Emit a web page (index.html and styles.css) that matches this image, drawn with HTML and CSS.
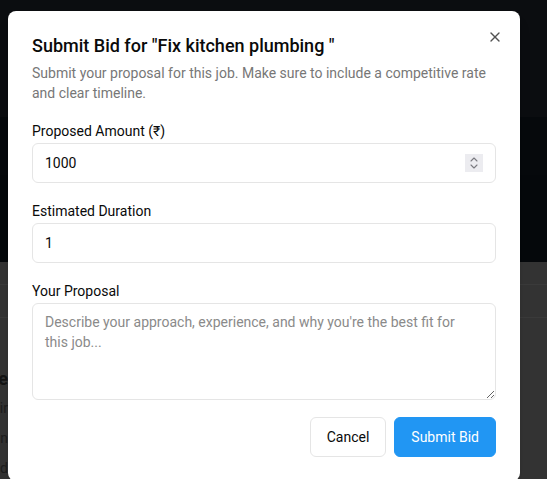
FILE: index.html
```html
<!DOCTYPE html>
<html lang="en">
<head>
<meta charset="utf-8">
<title>Submit Bid</title>
<link rel="stylesheet" href="styles.css">
</head>
<body>
<div class="page">
  <header class="page-top"></header>
  <div class="page-band">
    <div class="band-a"></div>
    <div class="band-b"></div>
  </div>
  <main class="page-main">
    <div class="row-line"></div>
    <div class="row-line second"></div>
    <div class="peek">
      <p class="peek-title">Active Jobs for you to explore</p>
      <p class="peek-text">Pipe repair</p>
      <p class="peek-text">Location</p>
      <p class="peek-text">Posted</p>
    </div>
  </main>

  <div class="dialog" role="dialog" aria-labelledby="dlg-title">
    <button class="close" aria-label="Close">
      <svg width="16" height="16" viewBox="0 0 24 24" fill="none" stroke="currentColor" stroke-width="2" stroke-linecap="round" stroke-linejoin="round"><path d="M18 6 6 18"/><path d="m6 6 12 12"/></svg>
    </button>
    <div class="dialog-header">
      <h2 id="dlg-title" class="dialog-title">Submit Bid for "Fix kitchen plumbing "</h2>
      <p class="dialog-desc">Submit your proposal for this job. Make sure to include a competitive rate and clear timeline.</p>
    </div>
    <form class="form">
      <div class="field">
        <label class="label" for="amount">Proposed Amount (₹)</label>
        <div class="input-wrap">
          <input class="input" id="amount" type="text" value="1000">
          <span class="spinner" aria-hidden="true">
            <svg width="10" height="14" viewBox="0 0 10 14" fill="none" stroke="#7a7a80" stroke-width="1.1" stroke-linecap="round" stroke-linejoin="round"><path d="M2 5 5 2 8 5"/><path d="M2 9 5 12 8 9"/></svg>
          </span>
        </div>
      </div>
      <div class="field">
        <label class="label" for="duration">Estimated Duration</label>
        <input class="input" id="duration" type="text" value="1">
      </div>
      <div class="field">
        <label class="label" for="proposal">Your Proposal</label>
        <textarea class="input textarea" id="proposal" rows="4" placeholder="Describe your approach, experience, and why you're the best fit for this job..."></textarea>
      </div>
      <div class="actions">
        <button type="button" class="btn btn-outline">Cancel</button>
        <button type="submit" class="btn btn-primary">Submit Bid</button>
      </div>
    </form>
  </div>
</div>
</body>
</html>
```

FILE: styles.css
```css
* { box-sizing: border-box; }
html, body { margin: 0; padding: 0; }
body {
  font-family: Roboto, "Open Sans", sans-serif;
  background: #333333;
  overflow: hidden;
}
.page {
  position: relative;
  width: 547px;
  height: 479px;
  overflow: hidden;
  display: flex;
  flex-direction: column;
}
.page-top { height: 117px; background: #0b0d10; flex: none; }
.page-band { height: 145px; flex: none; display: flex; flex-direction: column; }
.band-a { height: 58px; background: #06090c; }
.band-b { flex: 1; background: #05080b; }
.page-main { flex: 1; background: #333333; position: relative; }
.row-line { height: 23px; border-bottom: 1px solid #3a3a3a; }
.row-line.second { height: 33px; }
.peek {
  width: 8px;
  overflow: hidden;
  display: flex;
  flex-direction: column;
  align-items: flex-end;
  padding-top: 47px;
  color: #141414;
}
.peek p { margin: 0; white-space: nowrap; }
.peek-title { font-size: 18px; font-weight: 700; line-height: 28px; }
.peek-text { font-size: 14px; line-height: 30px; color: #1d1d1d; }

/* Dialog */
.dialog {
  position: absolute;
  left: 8px;
  top: 11px;
  width: 512px;
  background: #ffffff;
  border-radius: 8px;
  padding: 24px;
  display: flex;
  flex-direction: column;
  gap: 20px;
  box-shadow: 0 10px 15px -3px rgba(0,0,0,.1), 0 4px 6px -4px rgba(0,0,0,.1);
}
.close {
  position: absolute;
  right: 17px;
  top: 18px;
  width: 16px;
  height: 16px;
  padding: 0;
  border: 0;
  background: none;
  color: #0a0a0a;
  opacity: .7;
  display: flex;
}
.dialog-header { display: flex; flex-direction: column; gap: 6px; }
.dialog-title {
  margin: 0;
  font-size: 18px;
  font-weight: 500;
  line-height: 22px;
  color: #0a0a0a;
}
.dialog-desc {
  margin: 0;
  font-size: 14px;
  line-height: 20px;
  color: #777777;
}
.form { display: flex; flex-direction: column; gap: 20px; }
.field { display: flex; flex-direction: column; gap: 3px; }
.label {
  font-size: 14px;
  line-height: 17px;
  font-weight: 400;
  color: #0a0a0a;
}
.input-wrap { position: relative; }
.input {
  width: 100%;
  height: 40px;
  border: 1px solid #e5e5e5;
  border-radius: 6px;
  padding: 8px 12px;
  font-family: inherit;
  font-size: 14px;
  line-height: 20px;
  color: #0a0a0a;
  background: #fff;
  outline: none;
  display: block;
}
.textarea {
  height: 97px;
  resize: vertical;
  margin: 0;
  padding-right: 30px;
}
.textarea::placeholder { color: #8a8a8a; }
.spinner {
  position: absolute;
  right: 13px;
  top: 11px;
  width: 18px;
  height: 18px;
  background: #ececf0;
  display: flex;
  align-items: center;
  justify-content: center;
}
.actions {
  display: flex;
  justify-content: flex-end;
  gap: 8px;
  margin-top: -3px;
}
.btn {
  height: 40px;
  padding: 0 16px;
  border-radius: 6px;
  font-family: inherit;
  font-size: 14px;
  font-weight: 400;
  cursor: pointer;
}
.btn-outline { background: #fff; border: 1px solid #e5e5e5; color: #0a0a0a; }
.btn-primary { background: #2196f3; border: 1px solid #2196f3; color: #fff; }
```
